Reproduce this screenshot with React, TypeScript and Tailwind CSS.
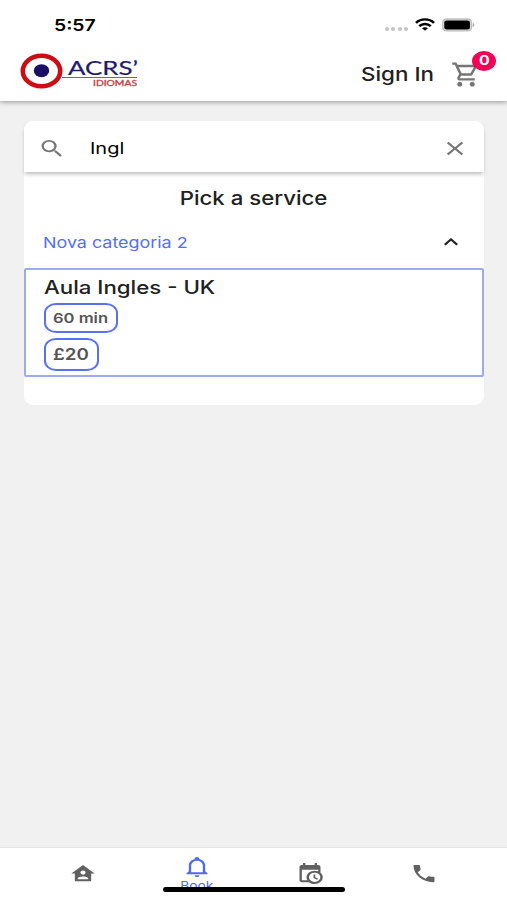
import { type ReactNode } from "react";
import clsx from "clsx";

type IconProps = {
  path: string;
  className?: string;
};

const icons = {
  cart: "M15.55 13c.75 0 1.41-.41 1.75-1.03l3.58-6.49A.996.996 0 0 0 20.01 4H5.21l-.94-2H1v2h2l3.6 7.59-1.35 2.44C4.52 15.37 5.48 17 7 17h12v-2H7l1.1-2h7.45zM6.16 6h12.15l-2.76 5H8.53L6.16 6zM7 18c-1.1 0-1.99.9-1.99 2S5.9 22 7 22s2-.9 2-2-.9-2-2-2zm10 0c-1.1 0-1.99.9-1.99 2s.89 2 1.99 2 2-.9 2-2-.9-2-2-2z",
  search:
    "M15.5 14h-.79l-.28-.27A6.471 6.471 0 0 0 16 9.5 6.5 6.5 0 1 0 9.5 16c1.61 0 3.09-.59 4.23-1.57l.27.28v.79l5 4.99L20.49 19l-4.99-5zm-6 0C7.01 14 5 11.99 5 9.5S7.01 5 9.5 5 14 7.01 14 9.5 11.99 14 9.5 14z",
  close:
    "M19 6.41 17.59 5 12 10.59 6.41 5 5 6.41 10.59 12 5 17.59 6.41 19 12 13.41 17.59 19 19 17.59 13.41 12z",
  chevronUp: "m12 8-6 6 1.41 1.41L12 10.83l4.59 4.58L18 14z",
  home: "M12,3L2,12H5V20H19V12H22L12,3M12,8.75A2.25,2.25 0 0,1 14.25,11A2.25,2.25 0 0,1 12,13.25A2.25,2.25 0 0,1 9.75,11A2.25,2.25 0 0,1 12,8.75M12,15C13.5,15 16.5,15.75 16.5,17.25V18H7.5V17.25C7.5,15.75 10.5,15 12,15Z",
  bell: "M10,21H14A2,2 0 0,1 12,23A2,2 0 0,1 10,21M21,19V20H3V19L5,17V11C5,7.9 7.03,5.17 10,4.29C10,4.19 10,4.1 10,4A2,2 0 0,1 12,2A2,2 0 0,1 14,4C14,4.1 14,4.19 14,4.29C16.97,5.17 19,7.9 19,11V17L21,19M17,11A5,5 0 0,0 12,6A5,5 0 0,0 7,11V18H17V11Z",
  calendar:
    "M15,13H16.5V15.82L18.94,17.23L18.19,18.53L15,16.69V13M19,8H5V19H9.67C9.24,18.09 9,17.07 9,16A7,7 0 0,1 16,9C17.07,9 18.09,9.24 19,9.67V8M5,21C3.89,21 3,20.1 3,19V5C3,3.89 3.89,3 5,3H6V1H8V3H16V1H18V3H19A2,2 0 0,1 21,5V11.1C22.24,12.36 23,14.09 23,16A7,7 0 0,1 16,23C14.09,23 12.36,22.24 11.1,21H5M16,11.15A4.85,4.85 0 0,0 11.15,16C11.15,18.68 13.32,20.85 16,20.85A4.85,4.85 0 0,0 20.85,16C20.85,13.32 18.68,11.15 16,11.15Z",
  phone:
    "M6.62 10.79c1.44 2.83 3.76 5.14 6.59 6.59l2.2-2.2c.27-.27.67-.36 1.02-.24 1.12.37 2.33.57 3.57.57.55 0 1 .45 1 1V20c0 .55-.45 1-1 1-9.39 0-17-7.61-17-17 0-.55.45-1 1-1h3.5c.55 0 1 .45 1 1 0 1.25.2 2.45.57 3.57.11.35.03.74-.25 1.02l-2.2 2.2z",
};

const Icon = ({ path, className }: IconProps) => (
  <svg
    viewBox="0 0 24 24"
    preserveAspectRatio="none"
    fill="currentColor"
    fillRule="evenodd"
    className={clsx("shrink-0", className)}
  >
    <path d={path} />
  </svg>
);

// Wide lettering: the text is stretched sideways from its left edge
const Wide = ({
  className,
  children,
}: {
  className?: string;
  children: ReactNode;
}) => (
  <span
    className={clsx(
      "inline-block origin-left scale-x-[1.21] whitespace-nowrap",
      className,
    )}
  >
    {children}
  </span>
);

const StatusBar = () => (
  <div className="flex h-[47px] items-center pt-[2px] pr-[32px] pl-[54px]">
    <Wide className="text-[16px] font-semibold text-black">5:57</Wide>
    <div className="ml-auto flex items-center">
      <div className="mt-2 flex gap-[2.5px]">
        {[0, 1, 2, 3].map((dot) => (
          <span key={dot} className="h-1 w-1 rounded-full bg-[#c4c4c4]" />
        ))}
      </div>
      <svg
        viewBox="0 0 20 14"
        preserveAspectRatio="none"
        className="ml-[7px] h-[13px] w-[20px]"
        fill="none"
        stroke="#000"
        strokeWidth="2.6"
      >
        <path d="M1 5.2C6 .3 14 .3 19 5.2" />
        <path d="M4.2 8.8c3.3-3.2 8.3-3.2 11.6 0" />
        <path d="M7 11c1.7-1.5 4.3-1.5 6 0l-3 2.8z" fill="#000" stroke="none" />
      </svg>
      <svg viewBox="0 0 33 14" className="ml-[7px] h-[14px] w-[33px]">
        <rect x="0.8" y="1" width="28.6" height="11.8" rx="3.6" fill="#ddd" stroke="#bdbdbd" strokeWidth="1.3" />
        <rect x="2.3" y="2.4" width="25.6" height="9" rx="2" fill="#000" />
        <path d="M30.7 4.8c2.2.7 2.2 3.7 0 4.4z" fill="#aaa" />
      </svg>
    </div>
  </div>
);

const Logo = () => (
  <svg viewBox="0 0 120 38" className="h-[38px] w-[120px]">
    <ellipse cx="21.5" cy="18" rx="18.7" ry="15.3" fill="#fff" stroke="#cc0d14" strokeWidth="4.6" />
    <ellipse cx="21.5" cy="17.7" rx="7.7" ry="6.5" fill="#1c0f66" />
    <path d="M42 24.5h75" stroke="#6a659f" strokeWidth="1" />
    <text
      x="48"
      y="22.3"
      fontSize="18.5"
      textLength="70"
      lengthAdjust="spacingAndGlyphs"
      fill="#241a6c"
      stroke="#241a6c"
      strokeWidth="0.2"
      fontFamily="Lato, sans-serif"
    >
      ACRS’
    </text>
    <text
      x="73"
      y="32.9"
      fontSize="8"
      textLength="44"
      lengthAdjust="spacingAndGlyphs"
      fill="#c93a40"
      stroke="#c93a40"
      strokeWidth="0.3"
      fontFamily="Lato, sans-serif"
    >
      IDIOMAS
    </text>
  </svg>
);

const Header = () => (
  <header className="relative h-[101px] shrink-0 bg-white shadow-[0_1px_5px_rgba(0,0,0,0.4)]">
    <StatusBar />
    <div className="flex h-[50px] items-center pr-[26px] pl-[20px]">
      <Logo />
      <div className="ml-auto flex h-full items-center pt-[4px]">
        <div className="w-[90px] pt-[1px]">
          <Wide className="text-[18.5px] font-medium">Sign In</Wide>
        </div>
        <div className="relative">
          <Icon path={icons.cart} className="h-[29px] w-[30px] text-[#757575]" />
          <span className="absolute -top-[9px] left-[21px] flex h-[20px] w-[24px] items-center justify-center rounded-[50%] bg-[#f50057] pt-px text-[13px] font-bold text-white">
            <span className="scale-x-[1.22]">0</span>
          </span>
        </div>
      </div>
    </div>
  </header>
);

const SearchBar = () => (
  <div className="relative flex h-[51px] items-center rounded-t-[9px] bg-white pt-[3px] pr-[15px] pl-[14px] shadow-[0_3px_4px_-1px_rgba(0,0,0,0.28)]">
    <Icon path={icons.search} className="h-[23px] w-[28px] text-[#757575]" />
    <Wide className="ml-[24px] pt-px text-[16.5px] text-black">Ingl</Wide>
    <Icon path={icons.close} className="ml-auto h-[23px] w-[28px] text-[#757575]" />
  </div>
);

const ServiceItem = () => (
  <div className="h-[109px] rounded-[2px] border-2 border-[#9dabf0] pt-[4px] pl-[18px]">
    <h2 className="h-[29px] leading-[27px]">
      <Wide className="text-[18.4px] font-medium">Aula Ingles - UK</Wide>
    </h2>
    <div className="flex h-[30px] w-[74px] items-center rounded-[12px/10px] border-2 border-[#5872ee] pl-[7px]">
      <Wide className="text-[13.7px] font-semibold text-[#555]">60 min</Wide>
    </div>
    <div className="mt-[5px] flex h-[33px] w-[55px] items-center rounded-[12px/10px] border-2 border-[#5872ee] pl-[7px]">
      <Wide className="text-[15.5px] font-semibold text-[#555]">£20</Wide>
    </div>
  </div>
);

const tabs = [
  { name: "Home", icon: icons.home },
  { name: "Book", icon: icons.bell, active: true },
  { name: "Appointments", icon: icons.calendar },
  { name: "Contact", icon: icons.phone },
];

const BottomNav = () => (
  <nav className="relative flex h-[53px] shrink-0 overflow-hidden border-t border-[#e3e3e3] bg-white px-[26px]">
    {tabs.map((tab) => (
      <button
        key={tab.name}
        aria-label={tab.name}
        className={clsx(
          "flex flex-1 flex-col items-center",
          tab.active ? "pt-[7px] text-[#4f6af0]" : "pt-[14px] text-[#616161]",
        )}
      >
        <Icon path={tab.icon} className="h-[23px] w-[28px]" />
        {tab.active && (
          <span className="scale-x-[1.2] text-[11.5px] leading-[17px]">Book</span>
        )}
      </button>
    ))}
    {/* home indicator */}
    <div className="absolute bottom-[8px] left-[163px] h-[5px] w-[182px] rounded-full bg-black" />
  </nav>
);

export default function App() {
  return (
    <div className="flex h-screen flex-col bg-[#f1f1f1] font-['Inter',sans-serif] text-[#212121]">
      <Header />
      <main className="flex-1 pt-[20px] pr-[23.5px] pl-[24.4px]">
        <div className="h-[284px] rounded-[9px] bg-white">
          <SearchBar />
          <h1 className="flex h-[50px] items-center justify-center pt-[4px]">
            <span className="scale-x-[1.2] text-[18.5px] font-medium">
              Pick a service
            </span>
          </h1>
          <div className="flex h-[46px] items-start justify-between pt-[8px] pr-[19px] pl-[19px]">
            <Wide className="pt-[2px] text-[14.8px] leading-[22px] text-[#5470ee]">
              Nova categoria 2
            </Wide>
            <Icon path={icons.chevronUp} className="h-[24px] w-[28px]" />
          </div>
          <ServiceItem />
        </div>
      </main>
      <BottomNav />
    </div>
  );
}
